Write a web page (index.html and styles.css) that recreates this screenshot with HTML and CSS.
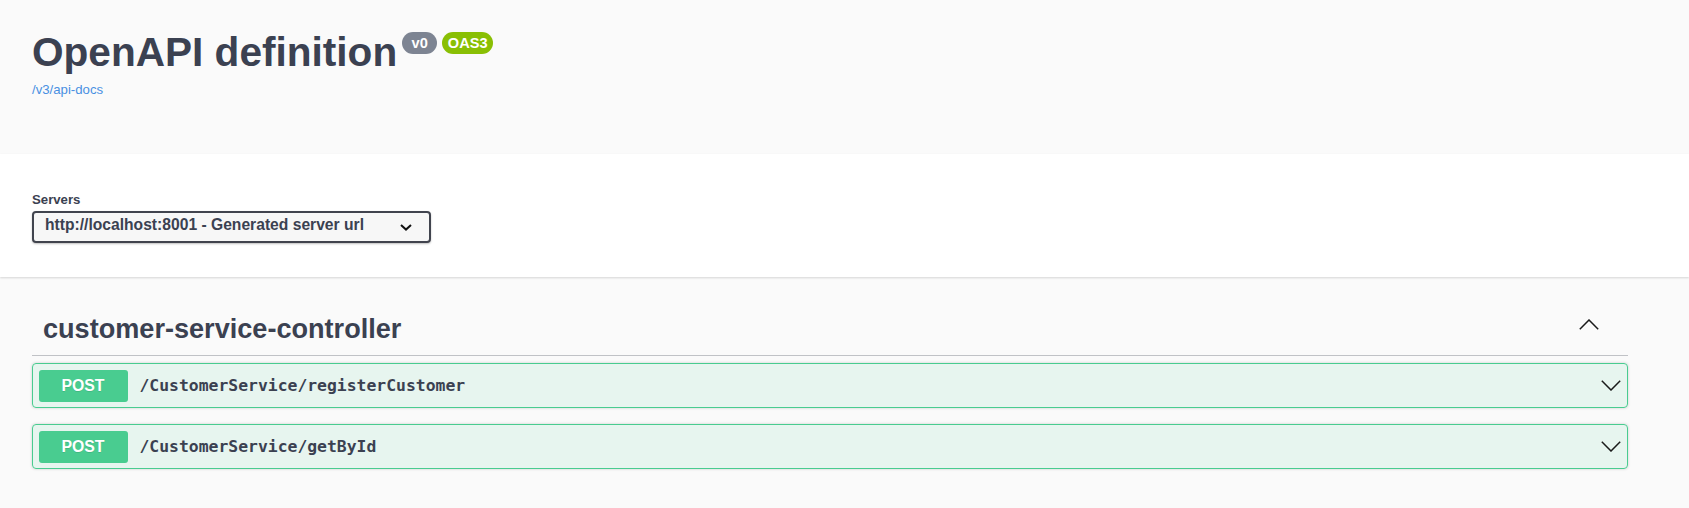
FILE: index.html
```html
<!DOCTYPE html>
<html lang="en">
<head>
<meta charset="utf-8">
<title>Swagger UI</title>
<link rel="stylesheet" href="styles.css">
</head>
<body>
<div class="info">
  <div class="wrapper">
    <div class="title-row">
      <h2 class="title">OpenAPI definition</h2>
      <span class="badge badge-version">v0</span>
      <span class="badge badge-oas">OAS3</span>
    </div>
    <a class="api-link" href="#">/v3/api-docs</a>
  </div>
</div>

<div class="scheme-container">
  <div class="wrapper">
    <label class="servers-title">Servers</label>
    <div class="select">
      <span class="select-text">http://localhost:8001 - Generated server url</span>
      <svg class="select-arrow" width="12" height="7" viewBox="0 0 12 7"><polyline points="1,1 6,5.6 11,1" fill="none" stroke="#111" stroke-width="2"/></svg>
    </div>
  </div>
</div>

<div class="tags">
  <div class="wrapper">
    <div class="tag-header">
      <h3 class="tag-title">customer-service-controller</h3>
      <svg class="tag-arrow" width="20" height="11" viewBox="0 0 20 11"><polyline points="0.8,10.2 10,1 19.2,10.2" fill="none" stroke="#1a1a1a" stroke-width="1.5"/></svg>
    </div>

    <div class="opblock">
      <span class="method">POST</span>
      <span class="path">/CustomerService/registerCustomer</span>
      <svg class="op-arrow" width="20" height="11" viewBox="0 0 20 11"><polyline points="0.8,0.8 10,10 19.2,0.8" fill="none" stroke="#1a1a1a" stroke-width="1.5"/></svg>
    </div>

    <div class="opblock">
      <span class="method">POST</span>
      <span class="path">/CustomerService/getById</span>
      <svg class="op-arrow" width="20" height="11" viewBox="0 0 20 11"><polyline points="0.8,0.8 10,10 19.2,0.8" fill="none" stroke="#1a1a1a" stroke-width="1.5"/></svg>
    </div>
  </div>
</div>
</body>
</html>
```

FILE: styles.css
```css
* { box-sizing: border-box; }
html, body { margin: 0; padding: 0; }
body {
  background: #fafafa;
  font-family: "Liberation Sans", Arial, sans-serif;
  color: #3b4151;
}
.wrapper {
  width: 1596px;
  margin-left: 32px;
}

/* info header */
.info {
  height: 154px;
  padding-top: 30px;
}
.title-row {
  display: flex;
  align-items: flex-start;
}
.title {
  margin: 0;
  font-size: 40.6px;
  font-weight: 700;
  line-height: 45px;
  color: #3b4151;
}
.badge {
  display: flex;
  align-items: center;
  justify-content: center;
  height: 22px;
  border-radius: 11px;
  color: #fff;
  font-size: 14.6px;
  font-weight: 700;
  margin-top: 1.5px;
}
.badge-version {
  background: #7d8492;
  width: 35px;
  margin-left: 5px;
}
.badge-oas {
  background: #89bf04;
  width: 51px;
  margin-left: 5px;
}
.api-link {
  display: block;
  margin-top: 7px;
  font-size: 13.2px;
  line-height: 15px;
  color: #4990e2;
  text-decoration: none;
}

/* servers */
.scheme-container {
  background: #fff;
  box-shadow: 0 1px 2px 0 rgba(0, 0, 0, 0.15);
  padding: 38px 0 34px;
  position: relative;
}
.servers-title {
  display: block;
  font-size: 13.2px;
  font-weight: 700;
  line-height: 15px;
  color: #3b4151;
}
.select {
  margin-top: 4px;
  width: 399px;
  height: 32px;
  border: 2px solid #41444e;
  border-radius: 4px;
  background: #f7f7f7;
  box-shadow: 0 1px 2px 0 rgba(0, 0, 0, 0.25);
  display: flex;
  align-items: center;
  padding-left: 11px;
}
.select-text {
  font-size: 15.65px;
  font-weight: 700;
  color: #3b4151;
  margin-bottom: 4px;
  white-space: nowrap;
}
.select-arrow {
  margin-left: auto;
  margin-right: 17px;
}

/* tags */
.tags {
  padding-top: 26px;
}
.tag-header {
  display: flex;
  align-items: flex-start;
  justify-content: space-between;
  padding: 11px 22px 11px 11px;
  border-bottom: 1px solid rgba(59, 65, 81, 0.3);
}
.tag-title {
  margin: 0;
  font-size: 27.1px;
  font-weight: 700;
  line-height: 30px;
  color: #3b4151;
}
.tag-arrow {
  margin-top: 5px;
  margin-right: 7px;
}
.opblock {
  display: flex;
  align-items: center;
  height: 45px;
  margin-top: 7px;
  margin-bottom: 16px;
  padding: 0 6px 0 5.5px;
  border: 1px solid #49cc90;
  border-radius: 4px;
  background: rgba(73, 204, 144, 0.1);
  box-shadow: 0 0 3px rgba(0, 0, 0, 0.19);
}
.method {
  display: flex;
  align-items: center;
  justify-content: center;
  width: 89px;
  height: 32px;
  border-radius: 3px;
  background: #49cc90;
  color: #fff;
  font-size: 15.8px;
  font-weight: 700;
  text-shadow: 0 1px 0 rgba(0, 0, 0, 0.1);
}
.path {
  padding-left: 12px;
  font-family: "DejaVu Sans Mono", "Liberation Mono", monospace;
  font-size: 16.4px;
  font-weight: 700;
  color: #3b4151;
}
.op-arrow {
  margin-left: auto;
}
```
